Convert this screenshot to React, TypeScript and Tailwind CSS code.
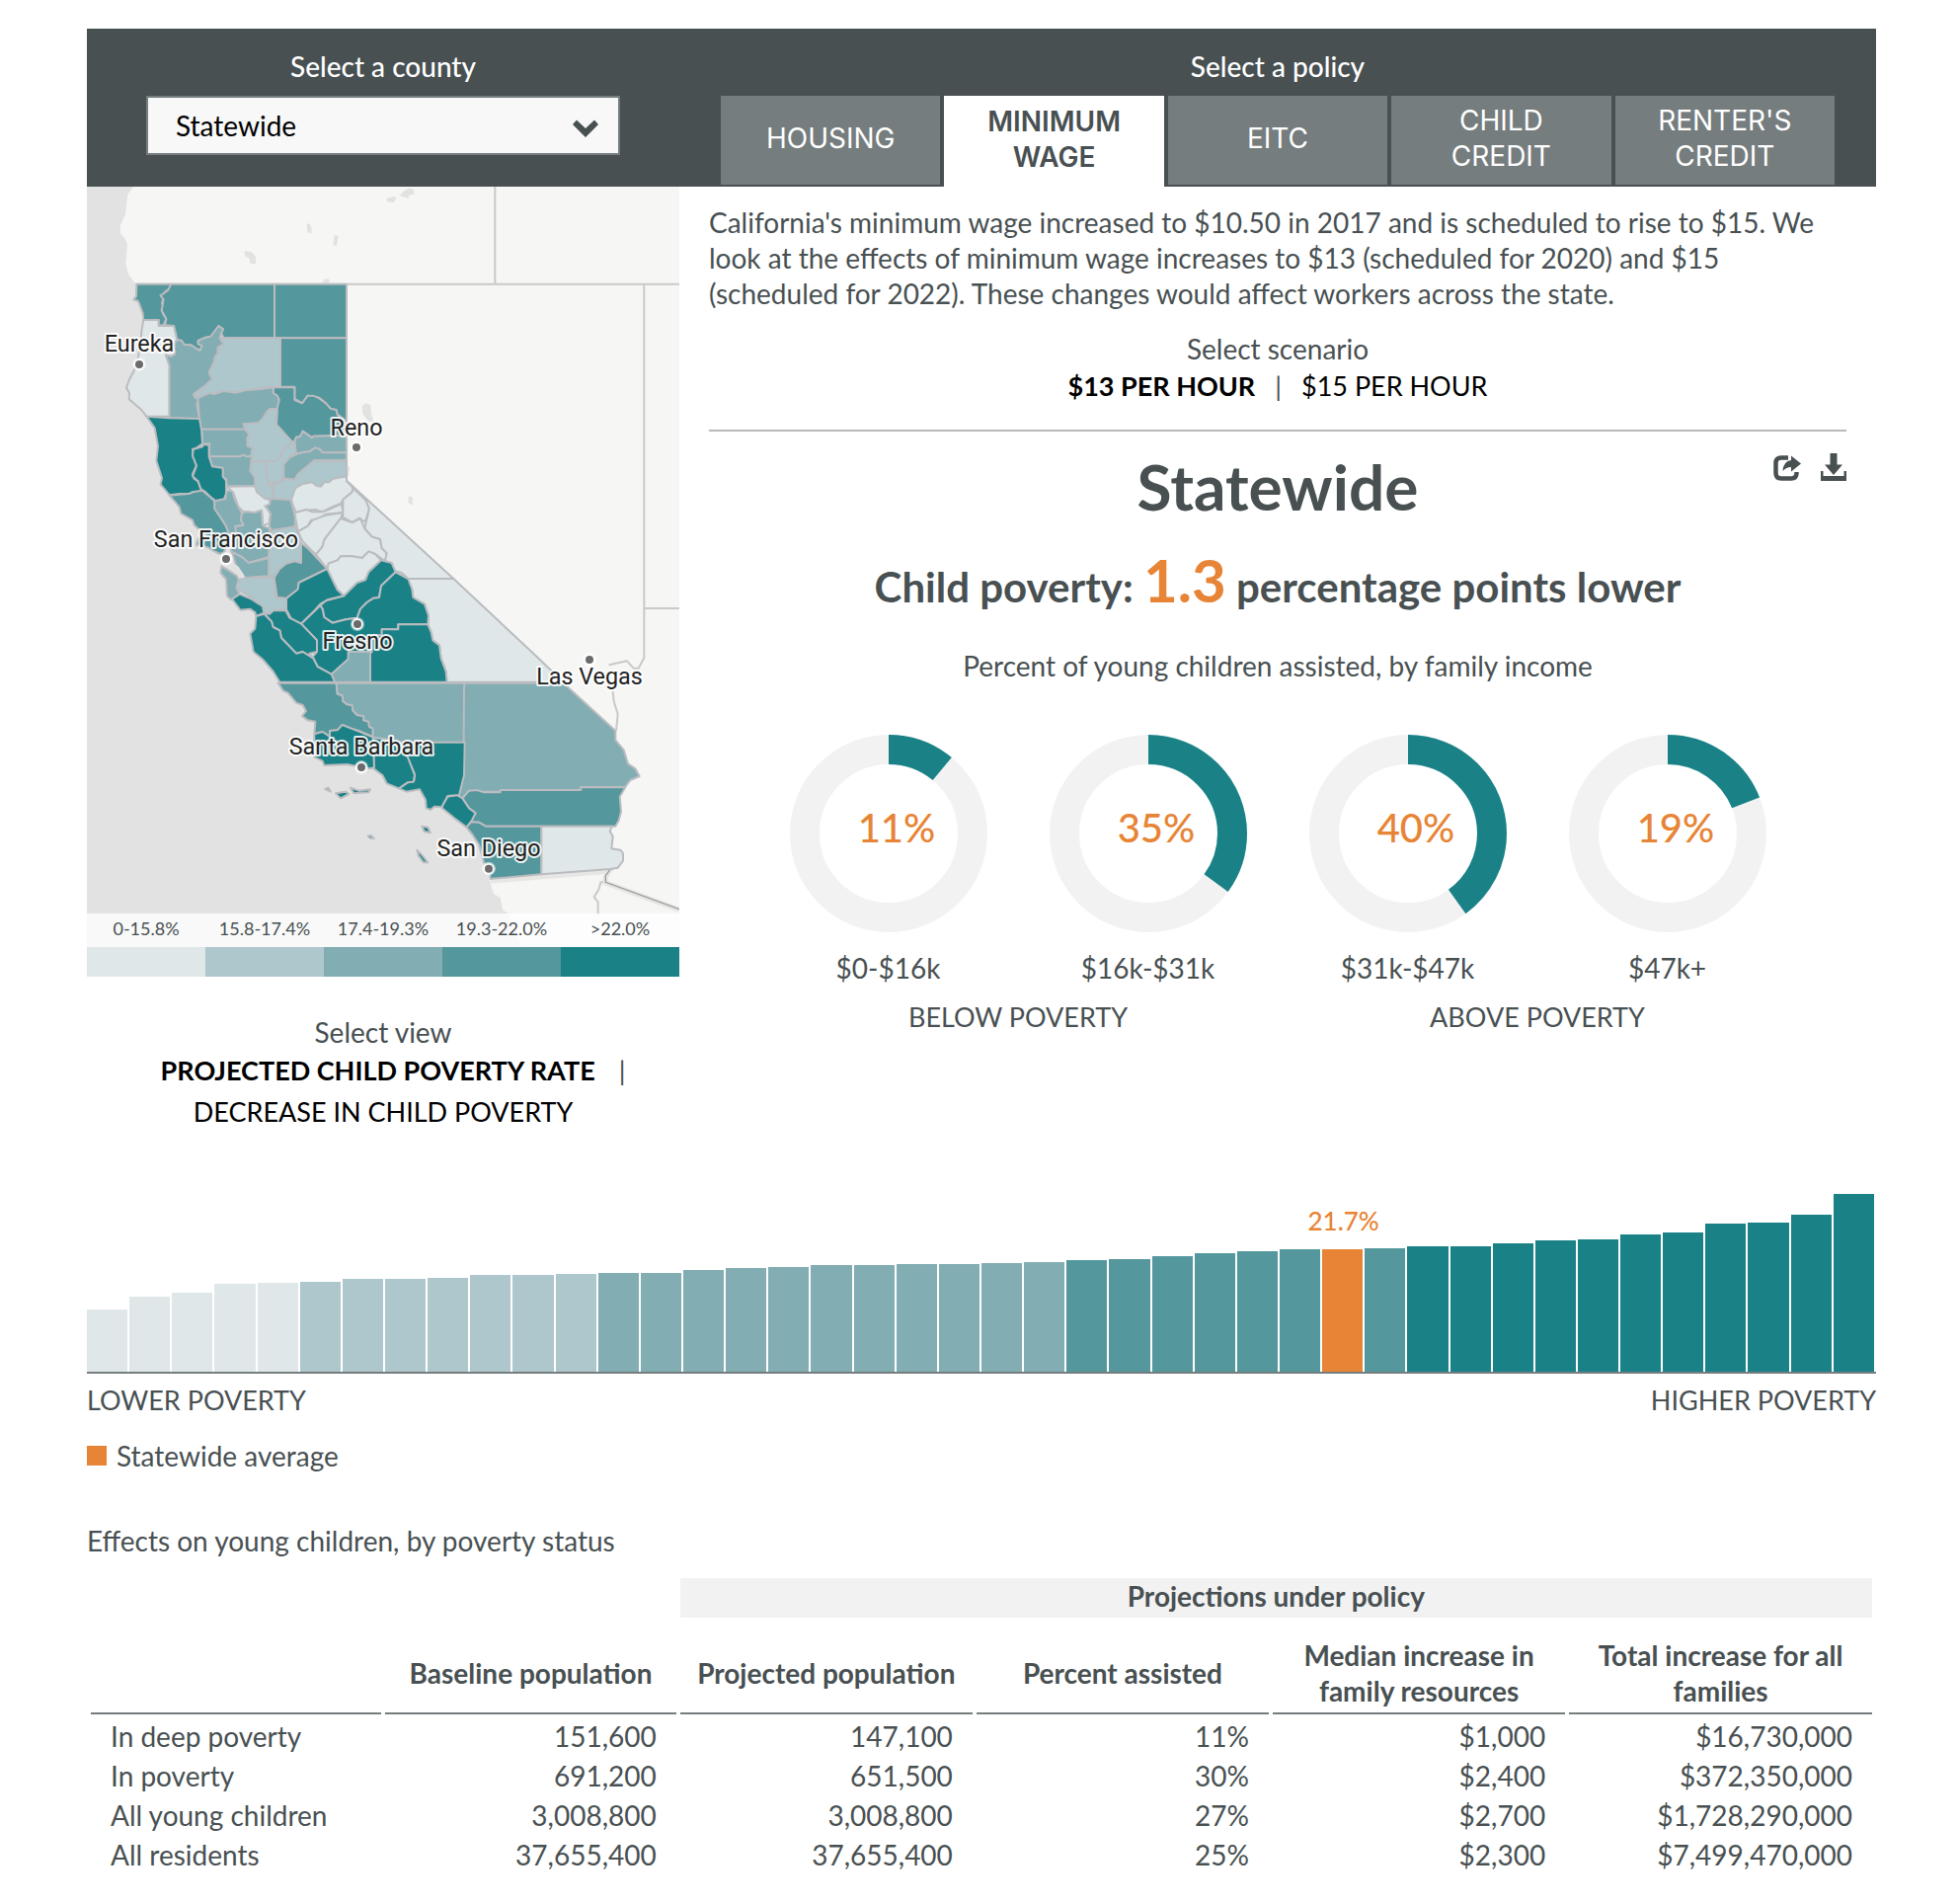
import React, { useState } from "react";

const LEVELS = ["#dfe7e8", "#aec7cc", "#81adb3", "#54979c", "#1a8287"];

type County = [level: number, points: string];

const NORTH: County[] = [
  [3, "175,23 280,23 276,38 264,44 258,52 248,58 257,66 252,80 256,92 251,103 258,118 265,128 258,146 242,150 242,132 196,132 194,112 186,90 180,75 166,70 174,60"],
  [3, "280,23 594,23 594,187 440,187 432,172 438,160 424,150 420,160 412,170 400,182 385,185 362,195 362,205 374,210 368,225 355,218 340,208 320,207 312,195 298,192 288,150 262,148 265,128 251,103 257,70 248,58 270,42"],
  [3, "594,23 813,23 813,187 594,187"],
  [0, "196,132 242,132 242,150 288,150 298,192 290,205 292,235 280,243 264,238 275,270 275,425 205,425 190,405 152,373 153,355 144,338 152,315 168,285 180,245 188,200 190,165"],
  [2, "298,192 312,195 320,207 340,208 355,218 368,225 374,210 362,205 362,195 385,185 400,182 424,150 438,160 432,172 428,188 440,205 422,215 422,235 414,243 410,260 395,292 405,312 385,330 348,358 352,368 362,370 358,390 366,432 275,430 275,270 264,238 280,243 292,235 290,205"],
  [1, "428,187 612,187 612,335 590,337 560,337 552,342 510,345 475,353 440,348 410,357 396,354 360,370 348,358 385,330 405,312 395,292 410,260 414,243 422,235 422,215 440,205"],
  [3, "612,187 813,187 813,440 785,418 782,405 765,402 750,385 730,368 695,362 680,385 655,372 655,335 612,335"],
  [3, "590,337 655,337 655,375 678,385 695,362 712,362 730,370 750,385 765,402 782,405 785,420 813,445 813,482 712,485 708,490 692,478 680,470 672,486 660,488 655,502 645,500 600,450 602,405 595,395 608,375 602,362 590,354"],
  [2, "360,370 396,354 410,357 440,348 475,353 510,345 552,342 590,337 590,354 602,362 608,375 602,402 580,402 570,412 560,430 545,445 500,448 505,464 370,464 366,430 362,378"],
  [2, "370,464 505,464 518,480 512,490 512,515 528,520 522,547 508,547 500,542 488,547 395,547 397,508 375,508 375,480"],
  [1, "500,448 545,445 560,430 570,412 580,402 602,402 600,450 645,500 640,515 620,525 612,548 603,560 570,562 525,560 522,547 528,520 512,515 512,490 518,480 505,464"],
  [2, "655,502 660,488 672,486 680,470 692,478 708,490 712,485 813,482 813,535 740,535 732,525 718,520 700,532 680,534 660,540"],
  [2, "660,540 680,534 700,532 718,520 732,525 740,535 813,535 813,558 715,558 672,595 660,610 655,617 622,613 622,570 640,550"],
  [1, "645,500 655,502 658,538 640,548 622,568 620,612 612,625 575,628 570,605 565,562 603,560 612,548 620,525 640,515"],
  [1, "713,560 813,560 813,607 788,612 770,615 760,625 745,625 735,638 722,636 708,625 680,630 657,643 645,678 590,675 590,630 612,625 622,615 655,618 665,600"],
  [2, "395,547 488,547 500,542 508,547 525,547 520,590 535,607 535,637 450,637 447,615 437,610 437,582 405,577"],
  [1, "525,562 565,562 572,610 577,635 588,632 588,675 565,675 540,655 535,637 535,612 520,590"],
  [4, "205,425 272,430 366,432 372,465 375,508 358,520 345,525 348,545 357,575 345,600 350,615 362,622 370,645 383,652 345,655 335,660 305,660 275,664 248,632 252,612 235,560 240,515 230,460"],
  [4, "378,510 395,512 395,547 405,577 437,582 437,608 447,620 447,660 440,678 418,684 398,668 385,655 370,645 362,622 345,607 357,575 345,545 347,525 375,517"],
  [0, "645,678 657,643 680,630 708,625 722,636 735,638 745,625 760,625 770,615 813,607 813,622 832,640 830,655 805,675 795,690 765,702 740,715 718,708 690,710 660,718 650,695"],
];

const CENTRAL: County[] = [
  [3, "125,65 155,62 185,60 195,55 225,50 248,70 262,82 262,105 280,130 295,155 305,178 300,190 240,190 200,155 195,140 160,120 155,100"],
  [3, "240,190 300,188 300,215 290,238 278,243 262,235 240,222 206,216 212,195"],
  [2, "262,82 295,75 298,50 316,52 322,75 345,120 342,140 350,155 325,158 335,180 305,180 295,155 262,105"],
  [0, "298,38 385,37 390,55 415,75 432,78 430,92 415,97 432,120 428,150 408,157 405,110 385,117 350,115 335,100 318,55"],
  [2, "345,120 352,115 385,117 405,110 408,157 428,165 430,192 330,195 325,160 350,155 342,140"],
  [2, "430,75 493,78 507,130 507,160 440,175 428,160 432,120 418,97 430,92"],
  [2, "308,195 430,190 427,252 365,270 345,252 312,236"],
  [2, "315,237 345,252 365,270 427,255 427,310 350,315 330,288"],
  [1, "430,172 507,160 515,175 525,215 525,270 505,265 480,272 460,288 440,312 427,308 427,252"],
  [3, "525,210 545,225 604,288 518,330 515,350 480,378 452,375 443,315 460,288 480,272 505,265 525,270"],
  [1, "335,322 350,315 443,315 447,375 478,378 480,412 440,415 430,425 410,422 400,400 370,372 340,355 328,340"],
  [2, "283,280 300,290 330,310 335,322 328,345 338,365 312,382 300,370 297,320 280,300"],
  [4, "315,380 338,365 370,378 408,402 412,422 388,432 385,420 370,410 340,413"],
  [0, "505,118 540,108 560,115 590,115 615,105 648,90 652,117 600,122 575,140 555,140 545,158 515,175"],
  [0, "515,175 545,158 560,140 600,125 652,117 645,135 595,200 590,220 570,245 530,205"],
  [0, "652,78 680,55 685,42 722,80 732,105 720,145 700,135 680,147 652,132"],
  [0, "570,245 590,220 595,200 645,135 680,147 705,135 718,165 740,190 765,198 770,225 785,240 780,265 750,243 730,235 710,255 680,250 645,250 635,262 608,272 604,288"],
  [0, "665,22 988,318 850,318 830,300 810,295 800,270 780,265 785,240 770,225 765,198 740,190 718,165 732,105 722,80 685,45"],
  [0, "850,318 988,318 1225,540 1322,632 968,632 965,600 950,560 945,520 925,505 920,480 910,460 912,430 900,395 865,375 862,350 848,335"],
  [0, "604,288 608,272 635,262 645,250 680,250 710,255 730,235 750,243 768,262 730,298 720,322 695,330 655,370 635,352"],
  [4, "655,370 695,330 720,322 730,298 768,262 800,270 812,298 768,340 762,375 745,377 725,390 705,410 695,437 660,442 620,452 595,435 590,410 583,400 600,385"],
  [4, "604,288 635,352 655,370 605,382 583,395 565,415 525,455 495,440 480,412 480,378 515,350 518,330"],
  [4, "583,400 590,410 595,435 620,452 660,442 695,437 705,410 725,390 745,377 762,375 768,340 812,298 850,318 862,350 865,375 900,395 912,430 910,457 820,457 820,472 770,472 770,490 740,490 740,540 670,540 668,565 617,608 595,598 575,585 560,555 573,540 573,505 525,455"],
  [4, "412,422 430,425 440,415 478,415 490,437 525,455 573,505 573,540 550,545 562,560 530,540 510,545 465,498 460,475 440,465 435,448"],
  [4, "388,432 412,425 435,448 440,465 460,475 465,498 510,545 530,540 562,560 575,585 617,608 628,632 460,632 440,600 410,565 380,540 370,485 385,470"],
  [2, "668,540 735,540 735,632 628,632 617,608 668,562"],
  [4, "740,490 770,490 770,472 820,472 820,457 910,457 920,480 925,505 945,520 950,560 965,600 968,632 735,632 735,545 740,540"],
];

const SOUTH: County[] = [
  [3, "155,95 332,95 335,128 350,132 352,150 365,160 380,162 382,178 395,192 415,195 415,208 430,212 432,228 443,232 443,258 400,240 375,232 350,222 335,238 312,240 315,258 290,243 265,250 268,212 245,208 228,195 240,180 230,162 210,155 185,125 170,118"],
  [2, "332,95 722,95 722,275 500,275 480,265 443,260 443,232 432,228 430,212 415,208 415,195 395,192 382,178 380,162 365,160 352,150 350,132 335,128"],
  [2, "722,95 1022,95 1180,240 1180,268 1205,298 1218,340 1240,355 1253,378 1225,390 1210,410 1075,412 1075,420 830,425 780,425 735,422 715,445 698,435 718,380 720,110"],
  [3, "715,445 735,422 760,420 780,427 830,427 830,420 1075,420 1075,412 1210,412 1193,440 1197,485 1190,512 1180,530 785,530 765,518 740,517 755,490 735,475"],
  [4, "655,465 670,440 698,435 715,445 735,475 755,490 742,515 727,533 690,505 653,475"],
  [4, "500,275 722,275 720,375 705,435 670,438 652,472 630,470 618,480 605,475 603,450 585,418 545,425 522,415 548,397 568,392 570,372 548,320"],
  [4, "445,262 480,265 520,290 548,318 570,375 566,395 548,397 522,415 485,400 472,375 445,355"],
  [4, "265,250 290,243 312,258 312,240 335,238 350,222 375,232 400,242 443,260 447,352 430,355 405,350 365,342 295,345 290,332 265,320"],
  [3, "727,533 742,517 765,518 785,530 955,530 955,676 800,690 797,665 780,640 765,585 745,555"],
  [0, "955,530 1170,530 1163,545 1172,560 1168,598 1195,602 1203,612 1203,635 1187,656 1165,660 955,676"],
  [4, "330,430 360,425 370,432 345,445"],
  [4, "375,413 400,422 435,418 430,427 385,430"],
  [4, "298,417 308,413 315,425"],
  [4, "592,530 610,533 618,550 599,546"],
  [4, "577,602 590,615 610,640 597,640 582,620"],
  [4, "428,560 437,558 446,567 434,566"],
];

const LAKES = [
  "973,-245 990,-262 1002,-268 1018,-264 1018,-250 1004,-248 1000,-238",
  "936,-238 960,-243 964,-236 955,-224 936,-228",
  "692,-162 702,-158 707,-145 706,-130 694,-135",
  "776,-126 788,-123 783,-92 772,-96",
  "503,-78 525,-74 537,-60 537,-38 520,-40 518,-55 504,-62",
  "738,18 748,7 760,8 760,20",
  "860,395 870,385 886,390 888,415 895,440 880,440 862,418",
  "815,575 823,580 820,600 815,612",
  "1002,667 1014,671 1013,695 1000,686",
];

const CITIES = [
  { name: "Eureka", x: 183, y: 267, ty: 228 },
  { name: "Reno", x: 843, y: 519, ty: 482 },
  { name: "San Francisco", x: 447, y: 858, ty: 822 },
  { name: "Fresno", x: 846, y: 1056, ty: 1132 },
  { name: "Las Vegas", x: 1551, y: 1164, ty: 1240 },
  { name: "Santa Barbara", x: 858, y: 1491, ty: 1452 },
  { name: "San Diego", x: 1245, y: 1799, ty: 1762 },
];

function Counties({ list, shift }: { list: County[]; shift?: string }) {
  return (
    <g transform={shift}>
      {list.map(([level, points]) => (
        <polygon key={points} points={points} fill={LEVELS[level]} />
      ))}
    </g>
  );
}

function CountyMap() {
  return (
    <svg viewBox="24 -273 1800 2310" className="block w-full" role="img" aria-label="Child poverty rate by county">
      <rect x="24" y="-273" width="1800" height="2310" fill="#e2e2e2" />
      <polygon
        fill="#f6f6f5"
        points="166,-273 148,-250 141,-190 125,-153 126,-133 140,-115 147,-98 142,-40 151,-5 172,22 220,150 260,400 330,600 450,700 560,860 660,1040 720,1200 900,1400 1100,1540 1230,1700 1247,1832 1260,1875 1280,1887 1288,1925 1305,1935 1345,2037 1824,2037 1824,-273"
      />
      {LAKES.map((p) => (
        <polygon key={p} points={p} fill="#e2e2e2" />
      ))}
      <g fill="none" stroke="#c9c9c8" strokeWidth="6" strokeLinejoin="round">
        <path d="M172 23H1824M1264 -273V23M1717 23V1160L1715 1162L1700 1190H1685L1665 1168L1610 1180M1717 1008H1824" />
        <path d="M1622 1260L1625 1290L1637 1330L1632 1380M1605 1840H1585L1580 1860L1565 1885L1577 1900V1940" />
      </g>
      <path d="M1250 1836L1612 1806L1600 1824V1842L1824 1924" fill="none" stroke="#e6e6e4" strokeWidth="16" />
      <path d="M1615 1800L1600 1820V1840L1824 1922" fill="none" stroke="#9c9c9b" strokeWidth="4" />
      <g stroke="#babcc0" strokeWidth="6" strokeLinejoin="round">
        <Counties list={NORTH} />
        <Counties list={CENTRAL} shift="translate(150 600)" />
        <Counties list={SOUTH} shift="translate(450 1140)" />
      </g>
      <path d="M455 870L480 885L500 915" fill="none" stroke="#e2e2e2" strokeWidth="12" />
      {CITIES.map((c) => (
        <g key={c.name}>
          <circle cx={c.x} cy={c.y} r="21" fill="#fff" fillOpacity="0.5" />
          <circle cx={c.x} cy={c.y} r="17" fill="#fff" />
          <circle cx={c.x} cy={c.y} r="12" fill="#6b6b6b" />
          <text
            x={c.x}
            y={c.ty}
            textAnchor="middle"
            fontFamily="Roboto, sans-serif"
            fontSize="70"
            fill="#222"
            stroke="#fff"
            strokeOpacity="0.9"
            strokeWidth="12"
            strokeLinejoin="round"
            paintOrder="stroke"
          >
            {c.name}
          </text>
        </g>
      ))}
    </svg>
  );
}

const RANGES = ["0-15.8%", "15.8-17.4%", "17.4-19.3%", "19.3-22.0%", ">22.0%"];
const SWATCHES = ["bg-[#dfe7e8]", "bg-[#aec7cc]", "bg-[#81adb3]", "bg-[#54979c]", "bg-[#1a8287]"];

const POLICIES = ["HOUSING", "MINIMUM WAGE", "EITC", "CHILD CREDIT", "RENTER'S CREDIT"];

const DONUTS = [
  { pct: 11, label: "$0-$16k" },
  { pct: 35, label: "$16k-$31k" },
  { pct: 40, label: "$31k-$47k" },
  { pct: 19, label: "$47k+" },
];

const BARS = [
  63, 76, 80, 89, 90, 91, 94, 94, 95, 98, 98, 99, 100, 100, 103, 105, 106, 108, 108, 109, 109, 110, 111, 113, 114, 117,
  120, 122, 124, 124, 125, 127, 127, 130, 133, 134, 139, 141, 150, 151, 159, 180,
];
const AVERAGE = 29;

function barColor(i: number) {
  if (i === AVERAGE) return "bg-[#e78435]";
  if (i < 5) return SWATCHES[0];
  if (i < 12) return SWATCHES[1];
  if (i < 23) return SWATCHES[2];
  if (i < 31) return SWATCHES[3];
  return SWATCHES[4];
}

const HEADS = ["Projected population", "Percent assisted", "Median increase in family resources", "Total increase for all families"];
const ROWS = [
  ["In deep poverty", "151,600", "147,100", "11%", "$1,000", "$16,730,000"],
  ["In poverty", "691,200", "651,500", "30%", "$2,400", "$372,350,000"],
  ["All young children", "3,008,800", "3,008,800", "27%", "$2,700", "$1,728,290,000"],
  ["All residents", "37,655,400", "37,655,400", "25%", "$2,300", "$7,499,470,000"],
];

function Donut({ pct, label }: { pct: number; label: string }) {
  const c = 2 * Math.PI * 85;
  return (
    <div className="flex flex-1 flex-col items-center">
      <svg viewBox="0 0 200 200" className="w-[200px]" role="img" aria-label={`${label}: ${pct}%`}>
        <circle cx="100" cy="100" r="85" fill="none" stroke="#f2f2f2" strokeWidth="30" />
        <circle
          cx="100"
          cy="100"
          r="85"
          fill="none"
          stroke="#1a8287"
          strokeWidth="30"
          strokeDasharray={`${(c * pct) / 100} ${c}`}
          transform="rotate(-90 100 100)"
        />
        <text x="108" y="109" textAnchor="middle" fontSize="40" fontWeight="500" fill="#e78435">
          {pct}%
        </text>
      </svg>
      <div className="mt-[18px]">{label}</div>
    </div>
  );
}

export default function App() {
  const [policy, setPolicy] = useState(1);
  const [scenario, setScenario] = useState(0);
  const [view, setView] = useState(0);
  return (
    <div className="bg-white pt-[29px] pr-[83px] pb-6 pl-[88px] font-[Lato,sans-serif] text-[28px] leading-9 text-[#485052]">
      <header className="grid grid-cols-[600fr_1212fr] bg-[#485052] pt-5">
        <div className="flex flex-col items-center px-[60px] text-white">
          <label htmlFor="county" className="font-medium">
            Select a county
          </label>
          <div className="relative mt-3 w-full">
            <select
              id="county"
              className="block h-[60px] w-full appearance-none border-2 border-[#757d7e] bg-[#f8f8f8] pl-7 text-[28px] text-black"
            >
              <option>Statewide</option>
            </select>
            <svg viewBox="0 0 26 18" className="pointer-events-none absolute top-6 right-[22px] w-[26px]" fill="#485052" aria-hidden="true">
              <path d="M4 0.5L13 9L22 0.5L26 5L13 18L0 5Z" />
            </svg>
          </div>
        </div>
        <div className="px-[42px]">
          <div className="text-center font-medium text-white">Select a policy</div>
          <div role="tablist" className="mt-3 grid grid-cols-5 gap-1">
            {POLICIES.map((p, i) => (
              <button
                key={p}
                role="tab"
                aria-selected={policy === i}
                onClick={() => setPolicy(i)}
                className={
                  policy === i
                    ? "h-[92px] bg-white px-7 pb-1 font-[Inter,sans-serif] text-[28px] font-semibold"
                    : "mb-[2px] h-[90px] bg-[#757d7e] px-7 pb-1 font-[Inter,sans-serif] text-[28px] text-white"
                }
              >
                {p}
              </button>
            ))}
          </div>
        </div>
      </header>

      <div className="grid grid-cols-[600fr_1212fr]">
        <div>
          <div className="relative">
            <CountyMap />
            <div className="absolute inset-x-0 bottom-0 grid grid-cols-5 bg-white/80 pb-1 text-center text-[18px] leading-[30px]">
              {RANGES.map((r) => (
                <div key={r}>{r}</div>
              ))}
            </div>
          </div>
          <div className="grid h-[30px] grid-cols-5">
            {SWATCHES.map((s) => (
              <div key={s} className={s} />
            ))}
          </div>
          <div className="mt-[38px] flex flex-col items-center">
            <div>Select view</div>
            <div className="flex items-center gap-6 pl-5 text-[27px] leading-[42px] text-black">
              <button onClick={() => setView(0)} className={view === 0 ? "font-bold" : ""}>
                PROJECTED CHILD POVERTY RATE
              </button>
              <span className="text-[#485052]">|</span>
            </div>
            <button
              onClick={() => setView(1)}
              className={view === 1 ? "text-[27px] leading-[42px] font-bold text-black" : "text-[27px] leading-[42px] text-black"}
            >
              DECREASE IN CHILD POVERTY
            </button>
          </div>
        </div>

        <div className="pt-[18px] pr-[30px] pl-[30px]">
          <p>
            California's minimum wage increased to $10.50 in 2017 and is scheduled to rise to $15. We look at the effects of
            minimum wage increases to $13 (scheduled for 2020) and $15 (scheduled for 2022). These changes would affect workers
            across the state.
          </p>
          <div className="mt-5 text-center">Select scenario</div>
          <div className="flex justify-center gap-5 pt-[2px] text-[27px] text-black">
            <button onClick={() => setScenario(0)} className={scenario === 0 ? "font-bold" : ""}>
              $13 PER HOUR
            </button>
            <span className="text-[#485052]">|</span>
            <button onClick={() => setScenario(1)} className={scenario === 1 ? "font-bold" : ""}>
              $15 PER HOUR
            </button>
          </div>
          <hr className="mt-[26px] border-t-2 border-[#b9b9b9]" />

          <div className="relative">
            <h1 className="pt-5 text-center text-[64px] leading-[72px] font-bold">Statewide</h1>
            <div className="absolute top-[22px] right-0 flex gap-5">
              <button aria-label="Share">
                <svg viewBox="0 0 28 28" className="w-7">
                  <path d="M15 4.500H8Q2.500 4.500 2.500 10V20Q2.500 25.500 8 25.500H18Q23.500 25.500 23.500 20V19" fill="none" stroke="#485052" strokeWidth="4.500" />
                  <path d="M18 2.500L28 10.500L18 18.500V14Q13 14 9.500 18Q10 8 18 7Z" fill="#485052" />
                </svg>
              </button>
              <button aria-label="Download">
                <svg viewBox="0 0 26 28" className="w-[26px]" fill="#485052">
                  <path d="M9.500 0H16.500V11.500H22L13 22L4 11.500H9.500Z" />
                  <path d="M0 18H2.500V23H23.500V18H26V28H0Z" />
                </svg>
              </button>
            </div>
          </div>
          <h2 className="mt-[22px] text-center text-[42px] leading-[72px] font-bold">
            Child poverty: <span className="text-[60px] text-[#e78435]">1.3</span> percentage points lower
          </h2>
          <p className="mt-[26px] text-center">Percent of young children assisted, by family income</p>
          <div className="mx-auto mt-[52px] flex max-w-[1052px]">
            {DONUTS.map((d) => (
              <Donut key={d.label} {...d} />
            ))}
          </div>
          <div className="mx-auto mt-[14px] grid max-w-[1052px] grid-cols-2 text-center text-[27px]">
            <div>BELOW POVERTY</div>
            <div>ABOVE POVERTY</div>
          </div>
        </div>
      </div>

      <div className="mt-[60px] flex h-[184px] items-end border-b-2 border-[#757d7e]">
        {BARS.map((h, i) => (
          <div key={i} className="relative flex-1 pr-[2px]">
            {i === AVERAGE && (
              <div className="absolute bottom-full left-1/2 mb-[11px] -translate-x-1/2 text-[26px] font-medium text-[#e78435]">
                21.7%
              </div>
            )}
            <div className={barColor(i)} style={{ height: h }} />
          </div>
        ))}
      </div>
      <div className="mt-[9px] flex justify-between text-[27px]">
        <span>LOWER POVERTY</span>
        <span>HIGHER POVERTY</span>
      </div>
      <div className="mt-5 flex items-center gap-[10px]">
        <span className="size-5 bg-[#e78435]" />
        Statewide average
      </div>

      <h3 className="mt-[50px]">Effects on young children, by poverty status</h3>
      <table className="mt-4 w-full table-fixed border-separate border-spacing-1">
        <colgroup>
          <col className="w-[16.5%]" />
          <col className="w-[16.5%]" />
          <col className="w-[16.6%]" />
          <col className="w-[16.6%]" />
          <col className="w-[16.6%]" />
          <col />
        </colgroup>
        <thead>
          <tr>
            <td colSpan={2} />
            <th colSpan={4} className="bg-[#f2f2f2] pb-1 font-bold">
              Projections under policy
            </th>
          </tr>
          <tr>
            <td className="border-b-2 border-[#757d7e]" />
            <th className="border-b-2 border-[#757d7e] pt-4 pb-1 font-bold">Baseline population</th>
            {HEADS.map((h) => (
              <th key={h} className="border-b-2 border-[#757d7e] px-3 pt-4 pb-1 font-bold">
                {h}
              </th>
            ))}
          </tr>
        </thead>
        <tbody>
          {ROWS.map(([name, ...cells]) => (
            <tr key={name}>
              <th scope="row" className="px-5 text-left font-normal">
                {name}
              </th>
              {cells.map((c, i) => (
                <td key={i} className="px-5 text-right">
                  {c}
                </td>
              ))}
            </tr>
          ))}
        </tbody>
      </table>
    </div>
  );
}
